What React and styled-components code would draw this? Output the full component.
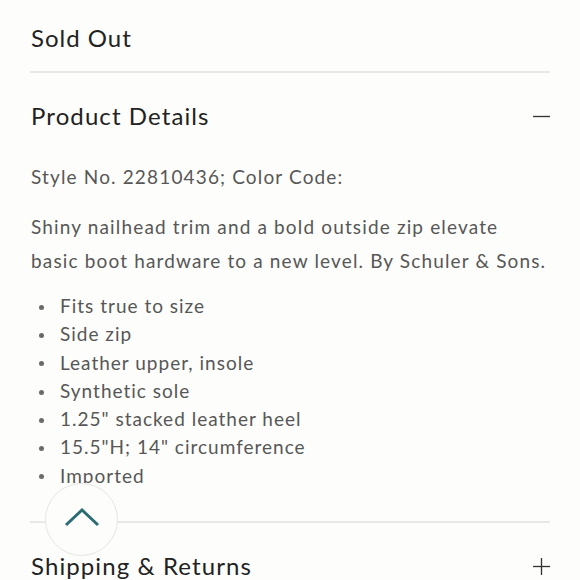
import React from 'react';
import styled, { createGlobalStyle } from 'styled-components';

const GlobalStyle = createGlobalStyle`
  html, body {
    margin: 0;
    padding: 0;
    background: #fdfdfb;
  }
  body {
    font-family: 'Lato', 'Liberation Sans', sans-serif;
    overflow: hidden;
  }
`;

const details = [
  'Fits true to size',
  'Side zip',
  'Leather upper, insole',
  'Synthetic sole',
  '1.25" stacked leather heel',
  '15.5"H; 14" circumference',
  'Imported',
];

const App = () => {
  return (
    <Page>
      <GlobalStyle />
      <SoldOut>Sold Out</SoldOut>
      <Divider />
      <SectionHeader>
        <SectionTitle>Product Details</SectionTitle>
        <Toggle viewBox="0 0 18 18">
          <line x1="0" y1="9" x2="18" y2="9" />
        </Toggle>
      </SectionHeader>
      <SectionBody>
        <BodyText>Style No. 22810436; Color Code:</BodyText>
        <Paragraph>
          Shiny nailhead trim and a bold outside zip elevate basic boot hardware to a new level. By Schuler &amp; Sons.
        </Paragraph>
        <List>
          {details.map((d) => (
            <Item key={d}>{d}</Item>
          ))}
        </List>
      </SectionBody>
      <Divider />
      <SectionHeader>
        <SectionTitle>Shipping &amp; Returns</SectionTitle>
        <Toggle viewBox="0 0 18 18">
          <line x1="0" y1="9" x2="18" y2="9" />
          <line x1="9" y1="0" x2="9" y2="18" />
        </Toggle>
      </SectionHeader>
      <ScrollTop aria-label="Back to top">
        <svg width="36" height="20" viewBox="0 0 36 20">
          <polyline points="2,18 18,3 34,18" fill="none" stroke="#2b6d72" strokeWidth="3" />
        </svg>
      </ScrollTop>
    </Page>
  );
};

const Page = styled.div`
  position: relative;
  padding: 0 30px;
  height: 580px;
  overflow: hidden;
  color: #222;
`;

const SoldOut = styled.div`
  font-size: 24px;
  letter-spacing: 1px;
  line-height: 30px;
  padding-top: 23px;
  padding-bottom: 18px;
  padding-left: 1px;
`;

const Divider = styled.div`
  height: 2px;
  background: #e8e8e6;
`;

const SectionHeader = styled.div`
  display: flex;
  align-items: center;
  justify-content: space-between;
  padding-left: 1px;
  margin-top: 28px;
`;

const SectionTitle = styled.div`
  font-size: 24px;
  letter-spacing: 1.1px;
  line-height: 30px;
`;

const Toggle = styled.svg`
  width: 17px;
  height: 17px;
  stroke: #333;
  stroke-width: 1.4;
`;

const SectionBody = styled.div`
  padding-top: 31px;
  padding-left: 1px;
  height: 352px;
  margin-bottom: 38px;
  box-sizing: border-box;
  overflow: hidden;
  color: #575757;
  font-size: 19px;
  letter-spacing: 1.15px;
`;

const BodyText = styled.div`
  line-height: 30px;
`;

const Paragraph = styled.p`
  margin: 18px 0 0;
  line-height: 34px;
`;

const List = styled.ul`
  margin: 14px 0 0;
  padding: 0;
  list-style: none;
  letter-spacing: 1px;
`;

const Item = styled.li`
  display: flex;
  align-items: center;
  line-height: 28.3px;
  &::before {
    content: '';
    width: 5px;
    height: 5px;
    border-radius: 50%;
    background: #6a6a6a;
    margin: 2px 16px 0 8px;
    flex-shrink: 0;
  }
`;

const ScrollTop = styled.button`
  position: absolute;
  left: 45px;
  top: 483px;
  width: 73px;
  height: 73px;
  border-radius: 50%;
  border: 1.5px solid #e6e6e4;
  background: #fdfdfb;
  display: flex;
  align-items: center;
  justify-content: center;
  padding: 0 0 6px;
  cursor: pointer;
`;

export default App;
